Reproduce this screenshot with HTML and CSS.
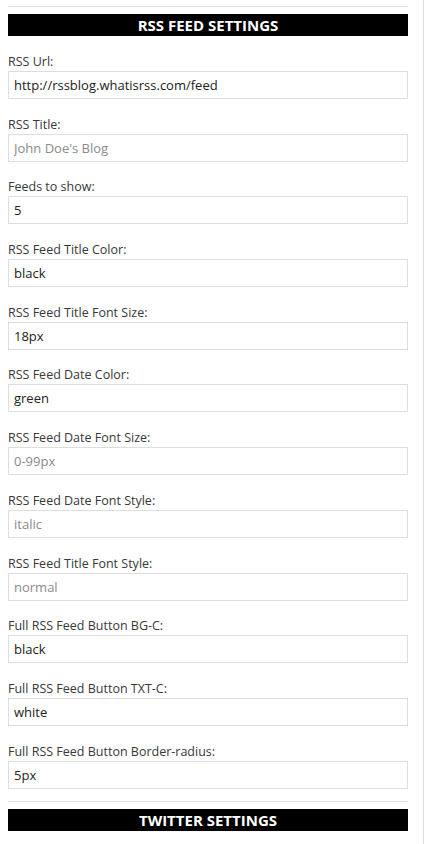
FILE: index.html
```html
<!DOCTYPE html>
<html>
<head>
<meta charset="utf-8">
<link rel="stylesheet" href="styles.css">
</head>
<body>
<div class="sidebar">
  <div class="panel">
    <hr class="rule">
    <h2 class="section-title">RSS FEED SETTINGS</h2>
    <div class="field"><label class="label">RSS Url:</label><input class="input" type="text" value="http://rssblog.whatisrss.com/feed"></div>
    <div class="field"><label class="label">RSS Title:</label><input class="input" type="text" placeholder="John Doe's Blog"></div>
    <div class="field"><label class="label">Feeds to show:</label><input class="input" type="text" value="5"></div>
    <div class="field"><label class="label">RSS Feed Title Color:</label><input class="input" type="text" value="black"></div>
    <div class="field"><label class="label">RSS Feed Title Font Size:</label><input class="input" type="text" value="18px"></div>
    <div class="field"><label class="label">RSS Feed Date Color:</label><input class="input" type="text" value="green"></div>
    <div class="field"><label class="label">RSS Feed Date Font Size:</label><input class="input" type="text" placeholder="0-99px"></div>
    <div class="field"><label class="label">RSS Feed Date Font Style:</label><input class="input" type="text" placeholder="italic"></div>
    <div class="field"><label class="label">RSS Feed Title Font Style:</label><input class="input" type="text" placeholder="normal"></div>
    <div class="field"><label class="label">Full RSS Feed Button BG-C:</label><input class="input" type="text" value="black"></div>
    <div class="field"><label class="label">Full RSS Feed Button TXT-C:</label><input class="input" type="text" value="white"></div>
    <div class="field last"><label class="label">Full RSS Feed Button Border-radius:</label><input class="input" type="text" value="5px"></div>
    <hr class="rule">
    <h2 class="section-title">TWITTER SETTINGS</h2>
  </div>
</div>
</body>
</html>
```
FILE: styles.css
```css
html, body {
  margin: 0;
  padding: 0;
  background: #fff;
}
body {
  font-family: "Open Sans", "Noto Sans", sans-serif;
  color: #333;
}
.sidebar {
  width: 423px;
  min-height: 844px;
  border-right: 1px solid #dddddd;
  box-sizing: content-box;
}
.panel {
  width: 400px;
  padding: 6px 8px 0 8px;
}
.rule {
  border: 0;
  border-top: 1px solid #dddddd;
  margin: 0 0 7px 0;
  height: 0;
}
.section-title {
  margin: 0 0 15px 0;
  background: #000;
  color: #fff;
  font-size: 15px;
  font-weight: 700;
  line-height: 22px;
  height: 22px;
  text-align: center;
  letter-spacing: 0;
}
.field {
  display: flex;
  flex-direction: column;
  gap: 1px;
  margin-bottom: 14.7px;
}
.field.last {
  margin-bottom: 12px;
}
.label {
  padding-top: 3px;
  font-size: 12.5px;
  line-height: 16px;
  color: #383838;
}
.input {
  box-sizing: border-box;
  width: 100%;
  height: 28px;
  margin: 0;
  padding: 0 5px;
  border: 1px solid #dddddd;
  background: #fff;
  font-family: "Open Sans", "Noto Sans", sans-serif;
  font-size: 13px;
  color: #222;
  outline: none;
}
.input::placeholder {
  color: #8a8a8a;
  opacity: 1;
}
```
